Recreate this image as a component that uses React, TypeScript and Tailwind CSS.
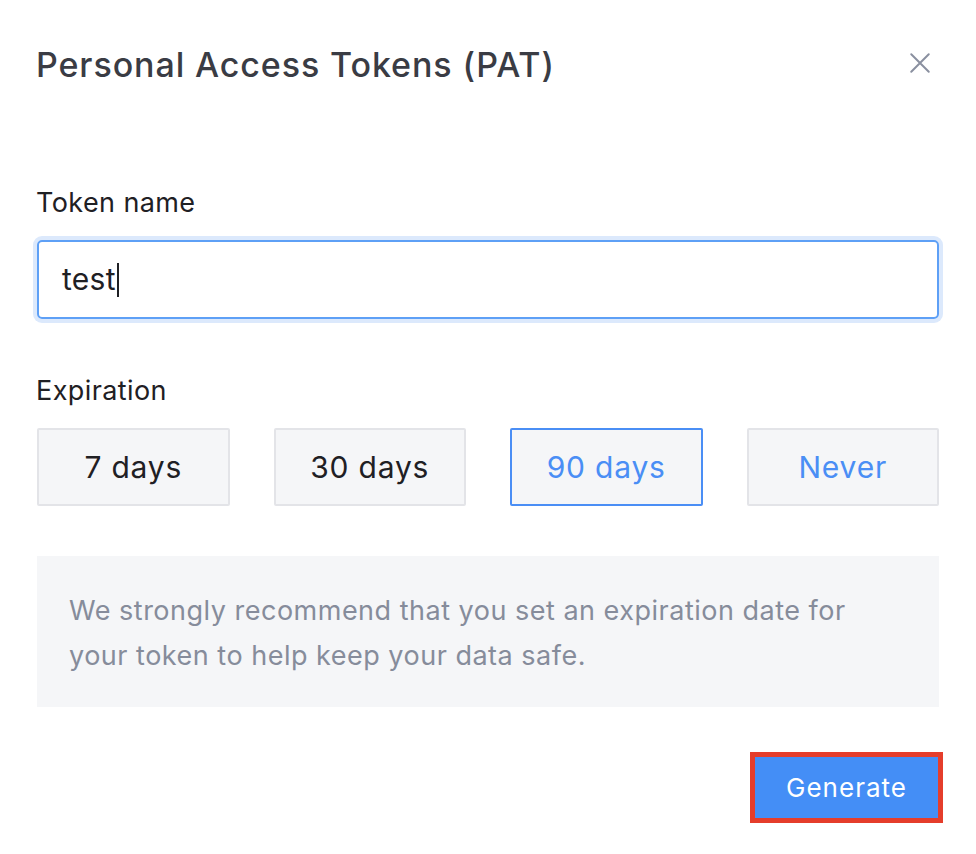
import React from "react";

export default function App() {
  const opts = [
    { label: "7 days", active: false, blue: false },
    { label: "30 days", active: false, blue: false },
    { label: "90 days", active: true, blue: true },
    { label: "Never", active: false, blue: true },
  ];
  return (
    <div
      className="w-[976px] h-[854px] bg-white px-[37px] pt-[40px] text-[#1f2024]"
      style={{ fontFamily: "Inter, 'Noto Sans', sans-serif" }}
    >
      <div className="flex items-center justify-between h-[48px]">
        <h1 className="text-[34px] font-medium text-[#3a3c44] tracking-[0.9px] -ml-[1px]">
          Personal Access Tokens (PAT)
        </h1>
        <svg width="30" height="30" viewBox="0 0 24 24" className="mr-[4px] -mt-[3px]" fill="none" stroke="#8a90a0" strokeWidth="1.6" strokeLinecap="round">
          <path d="M5 5L19 19M19 5L5 19" />
        </svg>
      </div>

      <div className="mt-[97px] text-[27px] leading-[36px] tracking-[0.4px] -ml-[1px]">Token name</div>
      <div className="mt-[19px] h-[79px] rounded-[5px] border-2 border-[#5ea0f6] ring-4 ring-[#dce9fc] flex items-center pl-[23px]">
        <span className="text-[30px] tracking-[0.3px]">test</span>
        <span className="w-[2px] h-[34px] bg-[#1f2024] ml-[1px]" />
      </div>

      <div className="mt-[54px] text-[27px] leading-[36px] tracking-[0.4px] -ml-[1px]">Expiration</div>
      <div className="mt-[19px] grid grid-cols-4 gap-[44px]">
        {opts.map((o) => (
          <div
            key={o.label}
            className={
              "h-[78px] rounded-[2px] bg-[#f5f6f8] flex items-center justify-center text-[30px] tracking-[0.8px] " +
              (o.active ? "border-2 border-[#4a8ef5]" : "border-2 border-[#e3e4e8]") +
              (o.blue ? " text-[#4a8ef5]" : " text-[#1f2024]")
            }
          >
            {o.label}
          </div>
        ))}
      </div>

      <div className="mt-[50px] bg-[#f5f6f8] h-[151px] pl-[32px] pt-[32px] text-[27px] leading-[45px] tracking-[0.5px] text-[#868c9b]">
        We strongly recommend that you set an expiration date for
        <br />
        your token to help keep your data safe.
      </div>

      <div className="mt-[45px] flex justify-end mr-[-4px]">
        <div className="border-[5px] border-[#e53d2b]">
          <div className="w-[183px] h-[61px] bg-[#448ef6] text-white text-[26px] tracking-[1px] flex items-center justify-center">
            Generate
          </div>
        </div>
      </div>
    </div>
  );
}
